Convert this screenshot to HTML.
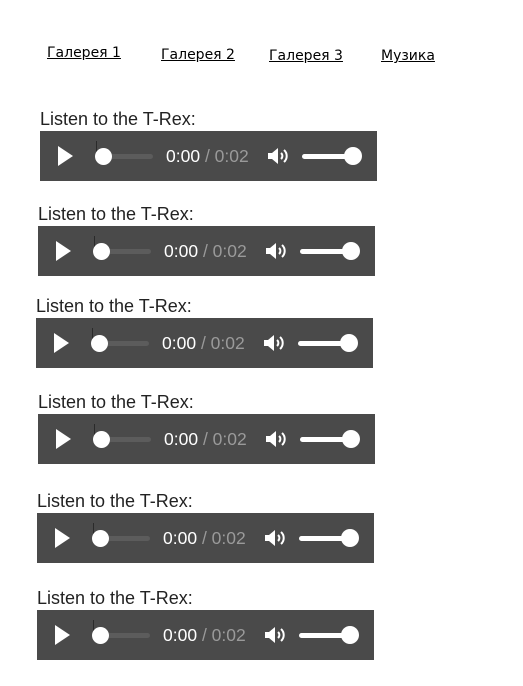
<!DOCTYPE html>
<html><head><meta charset="utf-8"><style>
*{margin:0;padding:0;box-sizing:border-box}
body{width:523px;height:686px;background:#fff;position:relative;overflow:hidden;font-family:"Liberation Sans",Arial,sans-serif}
a{position:absolute;color:#000;font-family:"DejaVu Sans","Liberation Sans",sans-serif;font-size:14px;text-decoration:underline;line-height:16px}
.l{position:absolute;font-size:18px;line-height:18px;color:#222;white-space:nowrap}
.p{position:absolute;width:337px;height:50px;background:#4a4a4a}
.p .play{position:absolute;left:18px;top:15px;width:0;height:0;border-left:15px solid #fff;border-top:10px solid transparent;border-bottom:10px solid transparent}
.p .tk{position:absolute;left:63px;top:23px;width:50px;height:5px;border-radius:3px;background:#5c5c5c}
.p .tick{position:absolute;left:56px;top:10px;width:1px;height:14px;background:#2a2a2a}
.p .kn{position:absolute;left:55px;top:17px;width:17px;height:17px;border-radius:50%;background:#fff}
.p .t{position:absolute;left:126px;top:15px;font-size:17.5px;line-height:20px;color:#fff;white-space:nowrap}
.p .t span{color:#9a9a9a}
.p svg{position:absolute;left:227px;top:16px}
.p .vt{position:absolute;left:262px;top:23px;width:50px;height:5px;border-radius:3px;background:#fff}
.p .vk{position:absolute;left:304px;top:16px;width:18px;height:18px;border-radius:50%;background:#fff}
</style></head><body>
<a style="left:47px;top:45px">Галерея 1</a>
<a style="left:161px;top:47px">Галерея 2</a>
<a style="left:269px;top:48px">Галерея 3</a>
<a style="left:381px;top:48px">Музика</a>

<div class="l" style="left:40px;top:110px">Listen to the T-Rex:</div>
<div class="p" style="left:40px;top:131px"><div class="play"></div><div class="tk"></div><div class="tick"></div><div class="kn"></div><div class="t">0:00 <span>/ 0:02</span></div><svg width="22" height="18" viewBox="0 0 22 18"><path d="M1 6h4l6-5v16l-6-5H1z" fill="#fff"/><path d="M14 6a4 4 0 0 1 0 6" stroke="#fff" stroke-width="2" fill="none"/><path d="M17 3a8 8 0 0 1 0 12" stroke="#fff" stroke-width="2" fill="none"/></svg><div class="vt"></div><div class="vk"></div></div>

<div class="l" style="left:38px;top:205px">Listen to the T-Rex:</div>
<div class="p" style="left:38px;top:226px"><div class="play"></div><div class="tk"></div><div class="tick"></div><div class="kn"></div><div class="t">0:00 <span>/ 0:02</span></div><svg width="22" height="18" viewBox="0 0 22 18"><path d="M1 6h4l6-5v16l-6-5H1z" fill="#fff"/><path d="M14 6a4 4 0 0 1 0 6" stroke="#fff" stroke-width="2" fill="none"/><path d="M17 3a8 8 0 0 1 0 12" stroke="#fff" stroke-width="2" fill="none"/></svg><div class="vt"></div><div class="vk"></div></div>

<div class="l" style="left:36px;top:297px">Listen to the T-Rex:</div>
<div class="p" style="left:36px;top:318px"><div class="play"></div><div class="tk"></div><div class="tick"></div><div class="kn"></div><div class="t">0:00 <span>/ 0:02</span></div><svg width="22" height="18" viewBox="0 0 22 18"><path d="M1 6h4l6-5v16l-6-5H1z" fill="#fff"/><path d="M14 6a4 4 0 0 1 0 6" stroke="#fff" stroke-width="2" fill="none"/><path d="M17 3a8 8 0 0 1 0 12" stroke="#fff" stroke-width="2" fill="none"/></svg><div class="vt"></div><div class="vk"></div></div>

<div class="l" style="left:38px;top:393px">Listen to the T-Rex:</div>
<div class="p" style="left:38px;top:414px"><div class="play"></div><div class="tk"></div><div class="tick"></div><div class="kn"></div><div class="t">0:00 <span>/ 0:02</span></div><svg width="22" height="18" viewBox="0 0 22 18"><path d="M1 6h4l6-5v16l-6-5H1z" fill="#fff"/><path d="M14 6a4 4 0 0 1 0 6" stroke="#fff" stroke-width="2" fill="none"/><path d="M17 3a8 8 0 0 1 0 12" stroke="#fff" stroke-width="2" fill="none"/></svg><div class="vt"></div><div class="vk"></div></div>

<div class="l" style="left:37px;top:492px">Listen to the T-Rex:</div>
<div class="p" style="left:37px;top:513px"><div class="play"></div><div class="tk"></div><div class="tick"></div><div class="kn"></div><div class="t">0:00 <span>/ 0:02</span></div><svg width="22" height="18" viewBox="0 0 22 18"><path d="M1 6h4l6-5v16l-6-5H1z" fill="#fff"/><path d="M14 6a4 4 0 0 1 0 6" stroke="#fff" stroke-width="2" fill="none"/><path d="M17 3a8 8 0 0 1 0 12" stroke="#fff" stroke-width="2" fill="none"/></svg><div class="vt"></div><div class="vk"></div></div>

<div class="l" style="left:37px;top:589px">Listen to the T-Rex:</div>
<div class="p" style="left:37px;top:610px"><div class="play"></div><div class="tk"></div><div class="tick"></div><div class="kn"></div><div class="t">0:00 <span>/ 0:02</span></div><svg width="22" height="18" viewBox="0 0 22 18"><path d="M1 6h4l6-5v16l-6-5H1z" fill="#fff"/><path d="M14 6a4 4 0 0 1 0 6" stroke="#fff" stroke-width="2" fill="none"/><path d="M17 3a8 8 0 0 1 0 12" stroke="#fff" stroke-width="2" fill="none"/></svg><div class="vt"></div><div class="vk"></div></div>
</body></html>
